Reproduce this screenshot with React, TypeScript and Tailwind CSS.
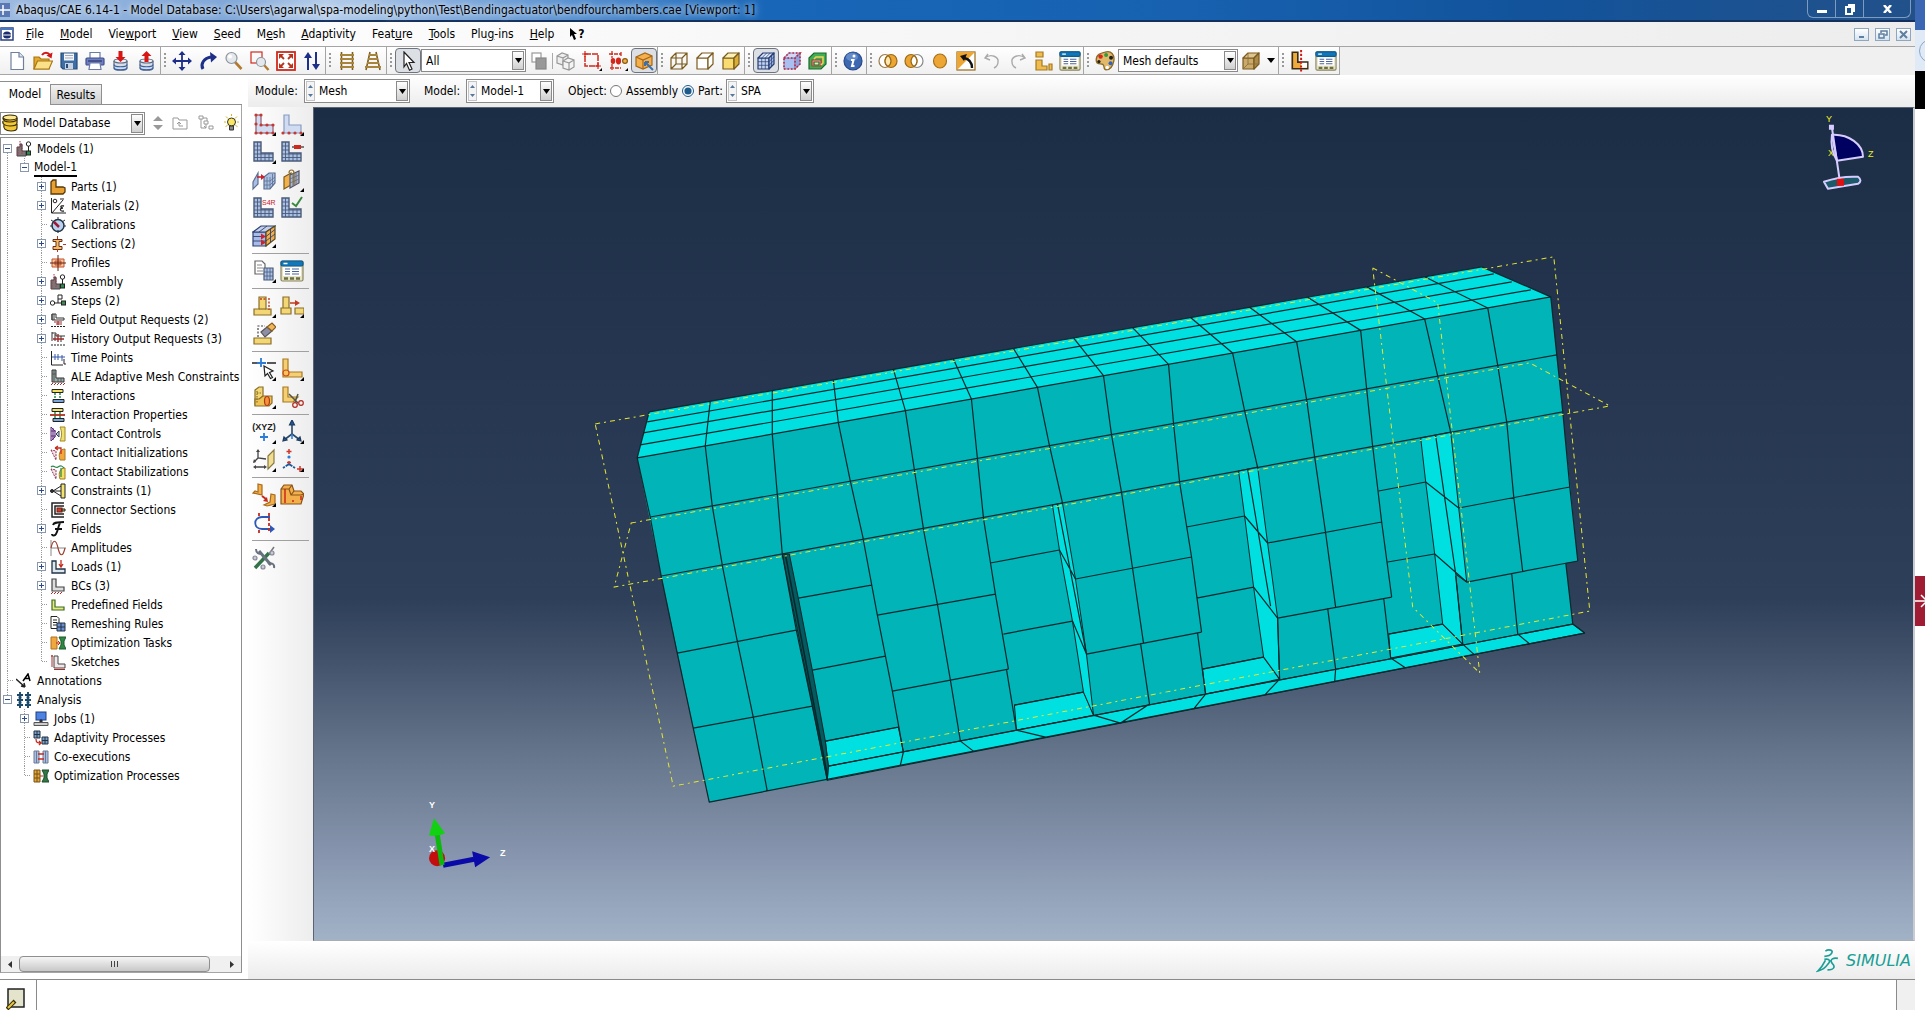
import React from 'react';

type Kids = { children?: React.ReactNode };

/* ---------- icon helpers ---------- */

const Ic = ({ s = 20, children }: Kids & { s?: number }) => (
  <svg width={s} height={s} viewBox="0 0 20 20" fill="none" stroke="#333" strokeWidth="1.2" className="shrink-0" aria-hidden="true">
    {children}
  </svg>
);

/* tool icon with an optional fly-out marker in the lower right corner */
const Ti = ({ fly, s = 24, children }: Kids & { fly?: boolean; s?: number }) => (
  <svg width={s} height={s} viewBox="0 0 24 24" fill="none" stroke="#333" strokeWidth="1.2" className="shrink-0" aria-hidden="true">
    {children}
    {fly && <path d="M24 20v4h-4z" fill="#000" stroke="none" />}
  </svg>
);

const MeshL = () => (
  <>
    <path d="M2 2h7v11h12v8H2z" fill="#a9c0e4" stroke="#4a5a78" strokeWidth="1.4" />
    <path d="M5.500 2v19M2 6h7M2 10h7M2 14h19M2 17.500h19M9 13v8M13 13v8M17 13v8" stroke="#4a5a78" strokeWidth="0.9" />
  </>
);

const TableIcon = () => (
  <>
    <rect x="1" y="2" width="22" height="20" rx="1.500" fill="#e6e2c4" stroke="#8a8560" />
    <rect x="1" y="2" width="22" height="5" rx="1.500" fill="#1277b8" stroke="#0d5c92" />
    <path d="M3.500 4.500h4" stroke="#fff" strokeWidth="1.500" />
    <rect x="3" y="8" width="18" height="9" fill="#fff" stroke="none" />
    <path d="M5 10h5M5 12.500h5M5 15h5M12 10h7M12 12.500h7M12 15h7" stroke="#4c669c" strokeWidth="1.100" />
    <path d="M4 19.500h4M10 19.500h4M16 19.500h4" stroke="#6b7040" strokeWidth="2.500" />
  </>
);

const Cube = ({ fill, top, side, line = '#7a5a1c' }: { fill: string; top: string; side: string; line?: string }) => (
  <g stroke={line} strokeLinejoin="round">
    <path d="M2 7h11v11H2z" fill={fill} />
    <path d="M2 7l5-5h11l-5 5z" fill={top} />
    <path d="M13 7l5-5v11l-5 5z" fill={side} />
  </g>
);

const Stack = ({ up }: { up?: boolean }) => (
  <>
    <path d="M3 10v7c0 3 13 3 13 0v-7" fill="#d9dde4" stroke="#5b6a82" />
    <ellipse cx="9.500" cy="10" rx="6.500" ry="2" fill="#eef1f6" stroke="#5b6a82" />
    <path d="M3 13.500c0 3 13 3 13 0M3 16.500c0 3 13 3 13 0" stroke="#3762a8" />
    {up ? (
      <path d="M9.500 0l5 5h-3v6h-4V5h-3z" fill="#d81414" stroke="none" />
    ) : (
      <path d="M7.500 0h4v6h3l-5 5-5-5h3z" fill="#d81414" stroke="none" />
    )}
  </>
);

const Yellow = '#f2d774';
const Orange = '#f3b04a';

/* ---------- toolbar icons ---------- */

const tb: Record<string, React.ReactNode> = {
  new: <Ic><path d="M4 1.500h8l4.500 4.500v12.500H4z" fill="#fff" stroke="#70809c" /><path d="M12 1.500V6h4.500" fill="#dfe6f2" stroke="#70809c" /></Ic>,
  open: <Ic><path d="M1 18V6h5l2 2h8v10z" fill="#e3a92c" stroke="#a87612" /><path d="M1 18l3.500-8h15L16 18z" fill="#fbe08a" stroke="#a87612" /><path d="M9 4c2-3 6-3 8 0" stroke="#d01818" strokeWidth="2" /><path d="M19.500 1.500l-1 6-5-3z" fill="#d01818" stroke="none" /></Ic>,
  save: <Ic><path d="M2 2h16v16H4l-2-2z" fill="#3d6ea5" stroke="#284c78" /><rect x="5" y="2.500" width="10" height="7" fill="#f4f6fa" stroke="none" /><path d="M6 4.500h8M6 7h8" stroke="#9ab" /><rect x="6" y="12" width="8" height="6" fill="#c8d2df" stroke="none" /><path d="M8 13v4" stroke="#284c78" strokeWidth="2" /></Ic>,
  print: <Ic><path d="M5 7V1.500h10V7" fill="#fff" stroke="#6a7ba6" /><rect x="1" y="7" width="18" height="7" rx="1" fill="#6d7fc0" stroke="#414f8c" /><path d="M3 10h14" stroke="#39437a" strokeWidth="1.500" /><path d="M5 12h10l1 6.500H4z" fill="#fff" stroke="#6a7ba6" /></Ic>,
  dbIn: <Ic><Stack /></Ic>,
  dbOut: <Ic><Stack up /></Ic>,
  pan: <Ic><path d="M10 3v14M3 10h14" stroke="#1d2f88" strokeWidth="1.800" /><path d="M10 0l3.500 4h-7zM10 20l3.500-4h-7zM0 10l4-3.500v7zM20 10l-4-3.500v7z" fill="#1d2f88" stroke="none" /></Ic>,
  rotate: <Ic><path d="M5 18C2 13 6 7 13 6" stroke="#1d2f88" strokeWidth="3" /><path d="M12 1l7 5-6 5.500z" fill="#1d2f88" stroke="none" /></Ic>,
  zoom: <Ic><path d="M11 11l6.500 7" stroke="#b27a2e" strokeWidth="2.600" /><circle cx="7.500" cy="7" r="5.500" fill="#e4e8ec" stroke="#8d949c" /><circle cx="6" cy="5.500" r="2" fill="#fff" stroke="none" /></Ic>,
  zoomBox: <Ic><rect x="1" y="1" width="11" height="11" stroke="#d02a1c" /><path d="M14 14l4.500 5" stroke="#b27a2e" strokeWidth="2.400" /><circle cx="11" cy="11" r="4.500" fill="#e4e8ec" stroke="#8d949c" /></Ic>,
  fit: <Ic><rect x="1" y="1" width="18" height="18" stroke="#d02a1c" strokeWidth="1.800" fill="#fff" /><path d="M4 4l4 4M16 4l-4 4M4 16l4-4M16 16l-4-4" stroke="#b8321c" strokeWidth="1.800" /><path d="M3 3h5L3 8zM17 3v5l-5-5zM3 17v-5l5 5zM17 17h-5l5-5z" fill="#b8321c" stroke="none" /></Ic>,
  cycle: <Ic><path d="M6 5v14M14 1v14" stroke="#1d2f88" strokeWidth="2" /><path d="M6 1l4 6H2zM14 19l4-6h-8z" fill="#1d2f88" stroke="none" /></Ic>,
  rails: <Ic><path d="M4.500 1v18M15.500 1v18" stroke="#7d5c20" strokeWidth="1.600" /><path d="M3 4h14M3 8h14M3 12h14M3 16h14" stroke="#a8853a" strokeWidth="1.800" /></Ic>,
  railsPersp: <Ic><path d="M7 1L3 19M13 1l4 18" stroke="#7d5c20" strokeWidth="1.600" /><path d="M6 4h8M5 8h10M4 12h12M2 16h16" stroke="#a8853a" strokeWidth="1.800" /></Ic>,
  cursor: <Ic><path d="M6 1l10 10.500h-5l3 6.500-2.500 1.200-3-6.700L6 16z" fill="#fff" stroke="#222" /></Ic>,
  copy: <Ic><rect x="3" y="2" width="9" height="9" fill="#fff" stroke="#999" /><rect x="7" y="7" width="10" height="11" fill="#999" stroke="#888" /></Ic>,
  ghost: <Ic><path d="M1 5l5-3 6 2v7l-5 3-6-2zM1 5l6 2v7M7 7l5-3" stroke="#999" fill="#eee" /><path d="M7 10l5-3 6 2v7l-5 3-6-2zM7 10l6 2v7M13 12l5-3" stroke="#999" fill="#f4f4f4" /></Ic>,
  selBox: <Ic><path d="M3 3h13v12H3z" stroke="#cf2a1c" strokeDasharray="6 1" strokeWidth="1.500" /><path d="M3 0v6M0 3h6M16 12v6M13 15h6" stroke="#cf2a1c" /><path d="M20 17v3h-3z" fill="#000" stroke="none" /></Ic>,
  selDots: <Ic><path d="M1 3h12M4 0v7M4 13v6M2 17h11M13 1v4" stroke="#cf2a1c" strokeWidth="1.300" strokeDasharray="4 1" /><ellipse cx="5" cy="10" rx="2.300" ry="3" fill="#d3261a" stroke="none" /><ellipse cx="10.500" cy="10" rx="2.600" ry="3.400" fill="#d3261a" stroke="none" /><circle cx="17" cy="10" r="2.400" fill={Orange} stroke="#8a5a10" /><path d="M20 17v3h-3z" fill="#000" stroke="none" /></Ic>,
  selCube: <Ic><path d="M2 6l9-4 7 3v9l-9 4-7-3z" fill="#f4b04c" stroke="#a6671a" /><path d="M2 6l7 3 9-4M9 9v9" stroke="#a6671a" /><path d="M19 19l-7-7M11 11h4M11 11v4" stroke="#3f6ea8" strokeWidth="2" /></Ic>,
  wire: <Ic><g stroke="#7a5a1c"><path d="M2 7h11v11H2zM7 2h11v11H7zM2 7l5-5M13 7l5-5M2 18l5-5M13 18l5-5" /></g></Ic>,
  hidden: <Ic><Cube fill="#fff" top="#fff" side="#fff" /></Ic>,
  shaded: <Ic><Cube fill="#f8dc72" top="#fdf0b4" side="#d9ae36" /></Ic>,
  meshCube: <Ic><Cube fill="#c3d4ee" top="#dbe6f6" side="#9fb6de" line="#253c74" /><path d="M5.700 7v11M9.300 7v11M2 10.700h11l5-5M2 14.300h11l5-5M5.700 7l5-5M9.300 7l5-5M15.500 4.500v11" stroke="#253c74" strokeWidth="0.700" /></Ic>,
  seedCube: <Ic><Cube fill="#a9bff0" top="#cfd8f6" side="#8fa4dc" line="#8090c0" /><path d="M2 7h11v11H2zM2 7l5-5h11l-5 5M18 2v11l-5 5" stroke="#d0203a" strokeWidth="1.600" strokeDasharray="1.500 2" /></Ic>,
  nested: <Ic><path d="M1 7l5-5h12v11l-5 5H1z" fill="#3fae54" stroke="#1e6a2c" /><path d="M4 9h9v6H4z" fill="#f5a7a0" stroke="#b43a2a" /><path d="M6 8l2-2h7v6l-2 2" stroke="#f0d458" strokeWidth="1.500" /><path d="M6 11h5v3H6z" fill="#dff0b0" stroke="#1e6a2c" /></Ic>,
  info: <Ic><circle cx="10" cy="10" r="9" fill="#3b68b0" stroke="#27498a" /><ellipse cx="9" cy="6" rx="6" ry="4" fill="#7fa3dc" stroke="none" opacity="0.600" /><circle cx="11" cy="5" r="1.500" fill="#fff" stroke="none" /><path d="M8 9h2.500L9 15h2.500" stroke="#fff" strokeWidth="2" /></Ic>,
  unionR: <Ic><ellipse cx="7" cy="10" rx="6" ry="6.500" fill="#fff" stroke="#9a7a48" /><ellipse cx="13" cy="10" rx="6" ry="6.500" fill="#eda534" stroke="#9a6a18" /><path d="M10 4.500c4 3 4 8 0 11c-4-3-4-8 0-11z" fill="#ffe7b0" stroke="#9a6a18" /></Ic>,
  unionL: <Ic><ellipse cx="13" cy="10" rx="6" ry="6.500" fill="#fff" stroke="#888" /><ellipse cx="7" cy="10" rx="6" ry="6.500" fill="#eda534" stroke="#9a6a18" /><path d="M10 4.500c4 3 4 8 0 11c-4-3-4-8 0-11z" fill="#fff" stroke="#9a6a18" /></Ic>,
  disc: <Ic><ellipse cx="10" cy="10" rx="6.500" ry="7" fill="#eda534" stroke="#a8721c" /></Ic>,
  replace: <Ic><rect x="1" y="1" width="18" height="18" fill="#fff" stroke="#9a6a18" /><path d="M1 1h18L1 19z" fill="#eda534" stroke="none" /><path d="M16 17c0-6-3-9-8-10" stroke="#111" strokeWidth="2.400" /><path d="M4 5l7-2-3 7z" fill="#111" stroke="none" /></Ic>,
  undo: <Ic><path d="M6 3l-3 4 5 2M3 7c6-5 14-1 13 4c0 3-2 5-4 6" stroke="#aaa" strokeWidth="1.400" /></Ic>,
  redo: <Ic><path d="M14 3l3 4-5 2M17 7C11 2 3 6 4 11c0 3 2 5 4 6" stroke="#aaa" strokeWidth="1.400" /></Ic>,
  parts: <Ic><path d="M2 1h7v5H2zM2 9h6v6h5v4H2zM15 13h3v6h-3z" fill="#eebc50" stroke="#a87a20" /></Ic>,
  table: <Ti s={22}><TableIcon /></Ti>,
  palette: <Ic s={22}><path d="M10 2c6-2 9 3 8 8s-3 8-7 8c-3 0-1-4-3-5s-6 1-6-4 4-6 8-7z" fill="#e2b968" stroke="#8d6a28" /><circle cx="6" cy="6" r="2" fill="#d6281e" stroke="none" /><circle cx="11" cy="4.500" r="1.800" fill="#2e9a42" stroke="none" /><circle cx="15.500" cy="7" r="1.800" fill="#202020" stroke="none" /><circle cx="15" cy="12" r="1.800" fill="#2f63c0" stroke="none" /><circle cx="12" cy="16" r="1.600" fill="#fff" stroke="none" /><circle cx="4.500" cy="10.500" r="1.500" fill="#222" stroke="none" /></Ic>,
  tanCube: <Ic><Cube fill="#c9aa6c" top="#dcc590" side="#a98a4c" /><path d="M7 2v11h11M7 13l-5 5" stroke="#8a6a30" strokeWidth="0.800" /></Ic>,
  datum: <Ic s={22}><path d="M3 2h5v9h9v6H3z" fill="#eeaa3c" stroke="#3b2c14" strokeWidth="1.500" /><path d="M11 11.700h5.500v4.500H11z" fill="#fff" stroke="none" /><path d="M11 0v20" stroke="#d01818" strokeWidth="1.800" strokeDasharray="2 1.500" /></Ic>,
};

/* ---------- tool box icons ---------- */

const GeoL = ({ dots }: { dots: number[][] }) => (
  <>
    <path d="M4 3h5v10h12v8H4z" fill="#cfdcf2" stroke="#8a9cc0" />
    {dots.map(([x, y]) => <circle key={`${x}-${y}`} cx={x} cy={y} r="1.600" fill="#c33a34" stroke="none" />)}
  </>
);

const tool: Record<string, React.ReactNode> = {
  seedPart: <Ti fly><GeoL dots={[[4, 3], [9, 3], [4, 12], [4, 21], [9, 13], [15, 13], [21, 13], [21, 21], [15, 21], [9, 21]]} /><path d="M4 3h5v10h12v8H4z" stroke="#c33a34" strokeWidth="0.600" /></Ti>,
  seedEdge: <Ti fly><GeoL dots={[[3, 21], [9, 21], [15, 21], [21, 21]]} /></Ti>,
  meshPart: <Ti fly><MeshL /></Ti>,
  meshRegion: <Ti><MeshL /><path d="M12 7h12" stroke="#555" strokeWidth="1.500" /><rect x="14" y="5" width="7" height="4" fill="#d0281c" stroke="none" /></Ti>,
  stackDir: <Ti><path d="M1 14l5-9v11l-5 5z" fill="#a9c0e4" stroke="#5d6f90" /><path d="M12 9l5-4h6v10l-5 6h-6z" fill="#a9c0e4" stroke="#5d6f90" /><path d="M12 13h6l5-4M12 17h6l5-5M15 9v12M18 9v12M20.500 6v12" stroke="#5d6f90" strokeWidth="0.800" /><path d="M5 9h6" stroke="#c8202e" strokeWidth="1.600" /><path d="M9 6l4 3-4 3z" fill="#c8202e" stroke="none" /></Ti>,
  assocMesh: <Ti fly><path d="M4 9l7-4v12l-7 4z" fill={Orange} stroke="#7a5a1c" /><path d="M10 7l9-4v12l-9 5z" fill="#a9b8cc" stroke="#556" /><path d="M13 6v12M16 5v12M10 11l9-4M10 15l9-4" stroke="#667" strokeWidth="0.800" /><path d="M9 5c0-4 5-4 5 0v12" stroke="#8a6a20" /></Ti>,
  elemType: <Ti><MeshL /><text x="10" y="9" fontSize="7" fontFamily="Liberation Sans" fill="#c8202e" stroke="none">S4R</text></Ti>,
  verify: <Ti><MeshL /><path d="M12 7l4 3 6-9" stroke="#3a8a42" strokeWidth="2" /></Ti>,
  bottomUp: <Ti fly><path d="M1 8h13v14H1z" fill="#a8bce8" stroke="#2f4270" /><path d="M1 8l8-6h14l-9 6z" fill="#c3d0ea" stroke="#2f4270" /><path d="M14 8l9-6v13l-9 7z" fill={Orange} stroke="#5a4a20" /><path d="M1 12.500h13l9-7M1 17h13l9-7M7 8l8-6M18.500 5v13.500" stroke="#2f4270" strokeWidth="0.900" /><path d="M9 9.500l5 3-5 3zM9 15.500l5 3-5 3z" fill="#d0202c" stroke="none" /></Ti>,
  remesh: <Ti fly><path d="M3 2h7l3 3v10H3z" fill="#fff" stroke="#666" /><path d="M5 6h5M5 9h6M5 12h6" stroke="#888" /><path d="M12 9h9v12h-9z" fill="#a9c0e4" stroke="#4a5a78" /><path d="M15 9v12M18 9v12M12 13h9M12 17h9" stroke="#4a5a78" strokeWidth="0.800" /></Ti>,
  manager: <Ti><TableIcon /></Ti>,
  partition: <Ti fly><path d="M7 3h7v12h5v6H2v-6h5z" fill={Yellow} stroke="#8a6f2a" /><path d="M7 15h7" stroke="#8a6f2a" /><path d="M8 5h6M17 4v12" stroke="#c33a1c" strokeDasharray="2 1.500" strokeWidth="1.400" /></Ti>,
  moveFace: <Ti fly><path d="M3 3h6v11H3zM1 14h10v6H1zM15 14h9v6h-9z" fill={Yellow} stroke="#8a6f2a" /><path d="M10 9h7" stroke="#c33a1c" strokeWidth="1.500" /><path d="M15 6l5 3-5 3z" fill="#c33a1c" stroke="none" /></Ti>,
  erase: <Ti><path d="M2 16h17v6H2z" fill={Yellow} stroke="#8a6f2a" /><path d="M6 15V4h7" stroke="#444" strokeDasharray="2 1.500" /><path d="M9 10l6-5 5 4-7 6z" fill="#8d8fa6" stroke="#555" /><path d="M15 5l5-4 4 4-4 4z" fill="#eeb75a" stroke="#8a5a20" /></Ti>,
  pick: <Ti fly><path d="M0 6h7M15 6h9" stroke="#222" strokeWidth="1.500" /><path d="M9 1v9M5 6h9" stroke="#2b7bd6" strokeWidth="1.800" /><path d="M12 9l9 5-3.500 1.500 3 5-2 1-3-5-2.500 2.500z" fill="#fff" stroke="#222" /></Ti>,
  mergeEdge: <Ti fly><path d="M3 2h5v13h14v5H3z" fill="#f4cf74" stroke="#a87a20" /><circle cx="6" cy="16" r="3" stroke="#cc4a18" fill="#f9c35c" /></Ti>,
  cellPart: <Ti fly><path d="M3 5l4-3h4v9l-3 3v6H3z" fill={Yellow} stroke="#8a6f2a" /><path d="M7 14l4-3h9v7l-3 3H3v-7z" fill="#eec254" stroke="#8a6f2a" /><ellipse cx="15" cy="16" rx="2.500" ry="4.500" fill="#f5913a" stroke="#b03a14" /><path d="M5 6v12M5 8h5" stroke="#8a6f2a" strokeDasharray="1.500 1" /></Ti>,
  trim: <Ti><path d="M3 2h5v10h10l-5 5H3z" fill="#f4cf74" stroke="#a87a20" /><path d="M9 9l9 9M18 9l-3 8" stroke="#554" strokeWidth="1.500" /><circle cx="15" cy="20" r="2.300" stroke="#b02a20" /><circle cx="21" cy="18" r="2.300" stroke="#b02a20" /></Ti>,
  xyz: <Ti fly><text x="12" y="10" textAnchor="middle" fontSize="9" fontWeight="bold" fontFamily="Liberation Sans" fill="#222" stroke="none">(XYZ)</text><path d="M12 13v8M8 17h8" stroke="#2b7bd6" strokeWidth="1.800" /></Ti>,
  axes: <Ti fly><path d="M12 4v10l-8 6M12 14l8 6" stroke="#2a4a6a" strokeWidth="1.600" /><path d="M12 0l2.500 5h-5zM3 21l1-4 3 3zM21 21l-4-1 3-3z" fill="#1e5aa8" stroke="#1e3a5a" /><path d="M12 14v5" stroke="#2b7bd6" strokeWidth="1.500" /></Ti>,
  plane: <Ti fly><path d="M6 3v7l8 1M6 10l-4 4M3 19h10" stroke="#444" strokeWidth="1.300" /><path d="M6 1l2 3H4zM1 15l1-4 2 3zM1 19l3-2v4zM15 19l-3-2v4z" fill="#444" stroke="none" /><path d="M16 8l6-6v13l-6 6z" fill="#f1dd92" stroke="#8a7a40" /></Ti>,
  csys: <Ti fly><path d="M9 1v5M6.500 3.500h5M17 21h6M20 18v6M9 13v3M7 14.500h4" stroke="#d0362a" strokeWidth="1.500" /><circle cx="9" cy="9" r="1.600" fill="#2b7bd6" stroke="none" /><path d="M9 16l-6 4M9 16l6 4" stroke="#1e5a9a" strokeWidth="1.800" strokeDasharray="4 1" /></Ti>,
  editMesh: <Ti fly><path d="M6 1l4 1v10l-9-2 2-2 3 1z" fill={Orange} stroke="#a86a1c" /><path d="M19 11l4 1v9l-8 2-3-1 6-3z" fill={Orange} stroke="#a86a1c" /><path d="M10 13l4 3" stroke="#c8281c" strokeWidth="2" /><path d="M16 19l-5-1 4-4z" fill="#c8281c" stroke="none" /></Ti>,
  virtual: <Ti><path d="M1 6l3-4h8l2 6h7l3 3-3 10H1z" fill={Orange} stroke="#8a5218" /><path d="M1 6h8l2 6h10M9 6l3-4M11 12l3-4M21 12l3-1" stroke="#8a5218" /><path d="M5 6v14M12 18h2M21 13v4" stroke="#c8281c" strokeWidth="1.500" /></Ti>,
  loop: <Ti><path d="M18 6H10c-9 0-9 12 0 12h10" stroke="#2d58b8" strokeWidth="1.800" /><path d="M18 14l5 4-5 4z" fill="#2d58b8" stroke="none" /><path d="M7 2v4M7 19v4M17 2v20" stroke="#c8281c" strokeWidth="1.800" strokeDasharray="3 2" /></Ti>,
  wrench: <Ti><path d="M3 22L17 7" stroke="#33734a" strokeWidth="3.500" /><path d="M17 8l5-7" stroke="#777" strokeWidth="1.500" /><path d="M7 5l12 14" stroke="#68727e" strokeWidth="3" /><path d="M4 3c0 4 3 6 6 4M22 22c1-4-3-6-6-4" stroke="#68727e" strokeWidth="2" /><circle cx="3" cy="12" r="2" fill="#c6cbd2" stroke="#889" /><circle cx="20" cy="7" r="2" fill="#c6cbd2" stroke="#889" /><circle cx="11" cy="21" r="2" fill="#c6cbd2" stroke="#889" /></Ti>,
};

/* ---------- tree icons (16px) ---------- */

const t16 = (children: React.ReactNode) => (
  <svg width="16" height="16" viewBox="0 0 16 16" fill="none" stroke="#222" strokeWidth="1" className="shrink-0" aria-hidden="true">
    {children}
  </svg>
);

const modelGlyph = t16(<><path d="M1 14V6h3V3h2v7h4v5H1z" fill="#777" stroke="#444" /><path d="M4 0v4M2 6v9M6 4v10" stroke="#c0304a" strokeDasharray="1.500 1" /><circle cx="12.500" cy="3" r="2.200" fill="#fff" /><path d="M12.500 5v5" /><rect x="10.500" y="10" width="4" height="4" fill="#2e8a4a" /></>);
const contactBase = (c: string, top: React.ReactNode) => t16(<><path d="M1 5l5 10V6z" fill="#f2e6ea" stroke="#8a3050" strokeDasharray="2 1" /><path d="M15 4c-5 0-7 5-5 11h5z" fill={c} stroke="#a87a20" />{top}</>);

const tree: Record<string, React.ReactNode> = {
  model: modelGlyph,
  part: t16(<path d="M1 3l2-2h3v7h7l2 1v4l-2 2H1z" fill="#e8a030" stroke="#5a3a08" strokeWidth="1.300" />),
  material: t16(<><path d="M1.500 0v15H16M2 15L13 2M10 1l4 0" /><circle cx="5" cy="3" r="1.800" /><path d="M14 8c-4-1-4 2-1 2-4 0-3 4 1 3" strokeWidth="1.300" /></>),
  calib: t16(<><circle cx="8" cy="8.500" r="6" fill="#b9d3ee" stroke="#234" strokeWidth="1.500" /><path d="M8 0v3M1 3l3 2M15 3l-3 2M0 9h2M14 9h2M8 13v3" stroke="#234" /><path d="M9 10L4 5" stroke="#a01838" strokeWidth="2.500" /></>),
  section: t16(<><path d="M3 3.500h9v2H9v5h3v3H3v-3h3v-5H3z" fill="#f0bc6a" stroke="#6a2c14" /><path d="M7.500 0v3M7.500 13v3M13 8.500h3" stroke="#b03a28" /></>),
  profile: t16(<><path d="M2 4h12v8H2z" fill="#f8c49c" stroke="#c4502c" /><path d="M5 6h6v4H5z" stroke="#c4502c" fill="#e89060" /><path d="M0 8h16M8 0v16" stroke="#5a2010" /></>),
  step: t16(<><circle cx="2.500" cy="10" r="2.200" fill="#fff" /><path d="M5 10h6M8 6v4M8 2h4v4H8z" fill="#fff" /><rect x="11.500" y="8" width="4" height="4" fill="#3d8a4c" /></>),
  field: t16(<><path d="M2 2h4v4h8v2H2zM2 2v6M4 8V2" stroke="#333" /><path d="M4 10h8M6 12h6M8 9v4" stroke="#a02828" /><path d="M1 14.500h14" strokeDasharray="2 1" /></>),
  history: t16(<><path d="M2 1v9M2 2h4v3h9M5 3v7M11 5v6" stroke="#333" /><path d="M3 8h11M8 3v8" stroke="#a02828" strokeWidth="1.400" /><path d="M1 14h14" strokeDasharray="2 1" /></>),
  time: t16(<><path d="M1.500 1v14H13" /><path d="M2 7h13M5 4v6M8 4v6M12 5v6" stroke="#3558a8" /><path d="M14 9v5h2" /></>),
  ale: t16(<><path d="M2 1h4v8h8v4H2z" fill="#9aa" stroke="#333" /><path d="M4 1v12M2 5h4M8 9v4M11 9v4" stroke="#555" /><path d="M1 16l2-2M4 16l2-2M7 16l2-2M10 16l2-2M13 16l2-2" stroke="#b02828" /></>),
  inter: t16(<><path d="M2 1.500h11v3H2z" fill="#f4e060" /><path d="M5 5v6M10 5v6" stroke="#2e8a4a" strokeWidth="1.500" strokeDasharray="2 1" /><path d="M3 11.500h11v3H3z" fill="#7aa6da" /></>),
  interProp: t16(<><path d="M2 1.500h11v3H2z" fill="#f4e060" /><path d="M5 5v6M10 5v6" stroke="#2e8a4a" strokeWidth="1.500" /><path d="M0 8h15" stroke="#b03020" strokeWidth="1.800" /><path d="M3 11.500h11v3H3z" fill="#7aa6da" /></>),
  contact: t16(<><path d="M1 1l4 4v6l-4 4zM3 2v12M1 5h5M1 10h5" fill="#f0e0f0" stroke="#5a2a7a" /><path d="M10 1h5v14h-5c2-4 2-10 0-14z" fill="#f0e070" stroke="#a08a20" /><path d="M6 8l3-3v6z" fill="#bcd" stroke="#345" /></>),
  contactInit: contactBase('#f4a83c', <path d="M5 3h6v6M5 3l3-2M5 3l3 2" stroke="#c82a1c" strokeWidth="1.300" />),
  contactStab: contactBase('#f4e060', <path d="M1 3c3-3 4 2 7 0s4-1 6 1M11 4v9" stroke="#2e8a4a" strokeWidth="1.300" />),
  constraint: t16(<><path d="M11 1h4v14h-4z" fill="#f4e36c" /><path d="M11 3L3 8l8 5M3 8h8" /><circle cx="2" cy="8" r="1.500" fill="#333" /></>),
  connector: t16(<><path d="M14 1H2v14h12M14 4H5v8h9" strokeWidth="1.500" /><rect x="7" y="6" width="5" height="4" fill="#c8402c" stroke="#7a1a10" /><path d="M12 7h3v2h-3z" fill="#e8c040" /></>),
  fields: t16(<path d="M3 4c1-3 4-2.500 11-3M10 2C8 6 8 10 6 13c-1 2-4 2-4 0M5 8h7" stroke="#111" strokeWidth="1.900" />),
  amp: t16(<><path d="M1 0v16M1 8h15" stroke="#888" /><path d="M1 8c2-9 5-9 7 0s5 9 7 0" stroke="#a04030" strokeWidth="1.200" /></>),
  load: t16(<><path d="M2 2h4v8h9v4H2z" fill="#dce8ee" stroke="#234" strokeWidth="1.300" /><path d="M11 1v6M9 5l2 3 2-3" stroke="#c8281c" strokeWidth="1.300" /></>),
  bc: t16(<><path d="M2 1h4v8h8v4H2z" fill="#ddd" stroke="#444" strokeWidth="1.200" /><path d="M1 16l2-2M4 16l2-2M7 16l2-2M10 16l2-2" stroke="#b02828" /></>),
  predef: t16(<path d="M2 3h3v7h9v3H2z" fill="#e8e880" stroke="#3a6a20" strokeWidth="1.200" />),
  remesh: t16(<><path d="M1 0.500h6l2 2v10H1z" fill="#fff" /><path d="M3 4h4M3 6.500h4M3 9h4" /><path d="M7 7h8v8H7z" fill="#6b8fd0" stroke="#234" /><path d="M11 7v8M7 11h8" stroke="#234" /></>),
  opt: t16(<><path d="M1 2h6v12H1z" fill="#f0a83c" stroke="#b0701c" /><path d="M6 8h4M8 6l2 2-2 2" stroke="#c8281c" /><path d="M9 2h7l-2 4v4l2 4H9l2-4V6z" fill="#2f8a44" stroke="#1c5a2a" /></>),
  sketch: t16(<><path d="M4 2h4v8h7v4H4z" fill="#f0e8e8" stroke="#444" /><path d="M1 2h2M2 1v12M4 15.500h11" stroke="#b02828" /></>),
  annot: t16(<><path d="M0 6l9 8M9 14l-1-4M9 14l-4-1" strokeWidth="1.500" /><path d="M7 8l5-7 2 7M9 5.500h5" stroke="#000" strokeWidth="1.500" /></>),
  analysis: t16(<path d="M4 0v16M12 0v16M1 3h6M1 8h6M1 13h6M9 3h6M9 8h6M9 13h6M2.500 5.500h3M2.500 10.500h3M10.500 5.500h3M10.500 10.500h3" stroke="#1c4a6c" strokeWidth="1.900" />),
  job: t16(<><rect x="3" y="1" width="10" height="8" fill="#4c82e4" stroke="#223c7a" /><path d="M7 9h2v2H7z" fill="#555" /><path d="M1 11.500h14v3H1z" fill="#ccc" stroke="#555" /></>),
  adapt: t16(<><path d="M1 1h6v7H1zM9 7h6v7H9z" fill="#7aa0c8" stroke="#234" /><path d="M4 1v7M1 4.500h6M12 7v7M9 10.500h6" stroke="#234" /><path d="M3 9c0 4 2 4 5 4M6 11l2 2-2 2" stroke="#c8281c" strokeWidth="1.300" /></>),
  coexec: t16(<><path d="M1 2h5v12H1zM10 2h5v12h-5z" fill="#a9bede" stroke="#6a7a9a" /><path d="M3.500 2v12M12.500 2v12" stroke="#6a7a9a" /><path d="M5 5h6M5 10h6" stroke="#c8281c" strokeWidth="1.500" /></>),
  optProc: t16(<><path d="M1 2h6v12H1z" fill="#e0a83c" stroke="#7a5010" /><path d="M4 2v12M1 6h6M1 10h6" stroke="#7a5010" /><path d="M7 8h3" stroke="#c8281c" /><path d="M9 2h7l-2 4v4l2 4H9l2-4V6z" fill="#2f7a44" stroke="#1c4a2a" /></>),
};

/* ---------- tree data ---------- */

/* guide codes: R first root, E last root, o open node, + closed node, t tee, e end branch, l line, b blank */
type Row = [string, string, string | null];
const rows: Row[] = [
  ['R', 'Models (1)', 'model'],
  ['lo', 'Model-1', null],
  ['lb+', 'Parts (1)', 'part'],
  ['lb+', 'Materials (2)', 'material'],
  ['lbt', 'Calibrations', 'calib'],
  ['lb+', 'Sections (2)', 'section'],
  ['lbt', 'Profiles', 'profile'],
  ['lb+', 'Assembly', 'model'],
  ['lb+', 'Steps (2)', 'step'],
  ['lb+', 'Field Output Requests (2)', 'field'],
  ['lb+', 'History Output Requests (3)', 'history'],
  ['lbt', 'Time Points', 'time'],
  ['lbt', 'ALE Adaptive Mesh Constraints', 'ale'],
  ['lbt', 'Interactions', 'inter'],
  ['lbt', 'Interaction Properties', 'interProp'],
  ['lbt', 'Contact Controls', 'contact'],
  ['lbt', 'Contact Initializations', 'contactInit'],
  ['lbt', 'Contact Stabilizations', 'contactStab'],
  ['lb+', 'Constraints (1)', 'constraint'],
  ['lbt', 'Connector Sections', 'connector'],
  ['lb+', 'Fields', 'fields'],
  ['lbt', 'Amplitudes', 'amp'],
  ['lb+', 'Loads (1)', 'load'],
  ['lb+', 'BCs (3)', 'bc'],
  ['lbt', 'Predefined Fields', 'predef'],
  ['lbt', 'Remeshing Rules', 'remesh'],
  ['lbt', 'Optimization Tasks', 'opt'],
  ['lbe', 'Sketches', 'sketch'],
  ['t', 'Annotations', 'annot'],
  ['E', 'Analysis', 'analysis'],
  ['b+', 'Jobs (1)', 'job'],
  ['bt', 'Adaptivity Processes', 'adapt'],
  ['bt', 'Co-executions', 'coexec'],
  ['be', 'Optimization Processes', 'optProc'],
];

const Guide = ({ k }: { k: string }) => {
  const box = 'REo+'.includes(k);
  const svg = (
    <svg width="17" height="19" viewBox="0 0 17 19" aria-hidden="true" className="shrink-0">
      <g stroke="#9a9a9a" strokeDasharray="1 1">
        {'lt+'.includes(k) && <path d="M8.500 0v19" />}
        {(k === 'e' || k === 'E' || k === 'o') && <path d="M8.500 0v10" />}
        {k === 'R' && <path d="M8.500 10v9" />}
        {'te'.includes(k) && <path d="M9 9.500h5" />}
      </g>
      {box && (
        <>
          <rect x="4.500" y="5.500" width="8" height="8" fill="#fff" stroke="#8a98ae" />
          <path d={k === '+' ? 'M6 9.500h5M8.500 7v5' : 'M6 9.500h5'} stroke="#2c4a8c" />
        </>
      )}
    </svg>
  );
  return box ? <button type="button" aria-label="Toggle branch" className="shrink-0">{svg}</button> : svg;
};

/* ---------- form bits ---------- */

const Arrow = () => (
  <span className="pointer-events-none m-px flex w-3 shrink-0 items-center justify-center border border-[#8a8a8a] bg-gradient-to-b from-white to-[#cfcfcf]">
    <svg width="7" height="5" viewBox="0 0 7 5"><path d="M0 0h7L3.500 5z" fill="#000" /></svg>
  </span>
);

const Combo = ({ label, value, className, spin }: { label: string; value: string; className: string; spin?: boolean }) => (
  <span className={`flex border border-[#8a8a8a] bg-white ${className}`}>
    {spin && (
      <span className="my-px ml-px flex w-[9px] shrink-0 flex-col items-center justify-around border border-[#c4c4c4] bg-[#f4f4f4]">
        <svg width="5" height="3" viewBox="0 0 5 3"><path d="M0 3h5L2.500 0z" fill="#55779a" /></svg>
        <svg width="5" height="3" viewBox="0 0 5 3"><path d="M0 0h5L2.500 3z" fill="#55779a" /></svg>
      </span>
    )}
    <select aria-label={label} defaultValue={value} className="min-w-0 flex-1 appearance-none bg-transparent px-1 outline-none">
      <option>{value}</option>
    </select>
    <Arrow />
  </span>
);

const Grip = () => (
  <span className="flex w-2 shrink-0 items-center justify-center">
    <svg width="2" height="16" viewBox="0 0 2 16"><path d="M1 0v16" stroke="#999" strokeWidth="2" strokeDasharray="2 2" /></svg>
  </span>
);

const Tb = ({ id, on }: { id: string; on?: boolean }) => (
  <button
    type="button"
    aria-label={id}
    className={`flex h-[25px] w-[26px] shrink-0 items-center justify-center overflow-hidden rounded-sm ${on ? 'border border-[#6d7480] bg-[#dcdfe3]' : ''}`}
  >
    {tb[id]}
  </button>
);

const Group = ({ first, children }: Kids & { first?: boolean }) => (
  <div className="flex items-center border-r border-[#a5a5a5]">
    {first ? <span className="w-1 shrink-0" /> : <Grip />}
    {children}
  </div>
);

const Tools = ({ ids }: { ids: string[] }) => (
  <div className="grid grid-cols-[24px_24px] gap-1 py-[5px]">
    {ids.map((id) => (
      <button key={id} type="button" aria-label={id} className="flex size-6 items-center justify-center">
        {tool[id]}
      </button>
    ))}
  </div>
);

/* ---------- viewport drawing ---------- */

const lerp = (a: number[], b: number[], x: number) => a[1] + ((x - a[0]) * (b[1] - a[1])) / (b[0] - a[0]);

const backX = [649, 710, 772, 833, 893, 953, 1013, 1073, 1132, 1190, 1249, 1307, 1366, 1424, 1481];
const frontX = [637, 705, 772, 838, 905, 971, 1037, 1103, 1168, 1232, 1296, 1360, 1424, 1487, 1550];
const row1X = [650, 712, 777, 850, 914, 977, 1049, 1111, 1173, 1244, 1306, 1366, 1437, 1497, 1556];
const row2X = [661, 722, 782, 863, 923, 983, 1062, 1121, 1179, 1257, 1314, 1372, 1450, 1506, 1562];

const edge = {
  back: [[649, 412], [1481, 267]],
  front: [[637, 458], [1550, 297]],
  row1: [[650, 517], [1556, 355]],
  row2: [[661, 576], [1562, 412]],
};
const pt = (e: number[][], x: number) => `${x} ${lerp(e[0], e[1], x).toFixed(1)}`;

const columns = frontX
  .map((fx, i) => `M${pt(edge.back, backX[i])}L${pt(edge.front, fx)}L${pt(edge.row1, row1X[i])}L${pt(edge.row2, row2X[i])}`)
  .join('');

const blockLines = [
  'M661 576L677 653L693 728L709 802L1584 633',
  'M722 565L737 641L753 717L767 791',
  'M782 554L796 630L812 706L827 780',
  'M677 653L796 630M693 728L812 706',
  'M798 598L871 585M812 670L885 656M825 741L898 727',
  'M863 540L877 615L892 691L903 752L900 765',
  'M923 529L937 604L950 680L960 741L973 751',
  'M983 518L995 594L1008 669M1006 669L1016 730L1045 737',
  'M877 615L995 594M892 691L1008 669',
  'M990 563L1059 550M1003 634L1072 621M1014 705L1083 692',
  'M1121 492L1132 568L1143 643M1140 643L1149 704L1120 723L1093 715',
  'M1179 482L1191 557L1201 632M1197 633L1205 694L1193 709',
  'M1075 579L1191 557M1086 654L1201 632',
  'M1277 618L1279 679M1455 576L1462 644',
  'M1186 527L1244 516M1196 598L1253 587M1202 669L1263 657',
  'M1314 457L1325 533L1335 607M1327 608L1335 669L1334 682',
  'M1372 446L1381 522L1391 597M1383 598L1390 658L1405 668',
  'M1267 543L1381 522M1277 618L1391 597',
  'M1378 491L1425 482M1387 562L1434 554M1388 634L1442 624',
  'M1506 422L1513 497L1522 572M1511 574L1517 634L1529 644',
  'M1562 412L1569 487L1577 561M1565 563L1572 624L1584 633',
  'M1458 508L1569 487M1466 582L1577 561',
  'M828 766L1572 624M1279 679L1264 695M1462 644L1474 655',
].join('');

const walls = [
  'M1052 505L1059 550L1072 621L1083 692L1093 715L1086 654L1075 579L1062 503z',
  'M1238 471L1244 516L1253 587L1263 657L1279 679L1277 618L1267 543L1257 467z',
  'M1420 438L1425 482L1434 554L1442 624L1462 644L1455 574L1466 582L1458 508L1450 432z',
];
const floors = [
  'M825 741L898 727L903 752L828 766z',
  'M1014 705L1083 692L1093 715L1016 730z',
  'M1202 669L1263 657L1279 679L1205 694z',
  'M1388 634L1442 624L1462 644L1390 658z',
  'M828 766L1572 624L1584 633L827 780z',
];

const topRows = [[647, 422, 1493, 274], [643, 433, 1511, 282], [640, 445, 1530, 290]];

const planes = [
  'M595 424L1553 257L1589 611L673 786z',
  'M631 523L1529 363L1609 406L614 587z',
  'M1372 268L1437 303L1479 673L1412 607z',
];

const Scene = () => (
  <svg viewBox="314 107 1598 834" preserveAspectRatio="xMidYMid slice" className="absolute inset-0 size-full" role="img" aria-label="Meshed part">
    <g strokeLinejoin="round">
      <path d="M649 412L1481 267L1550 297L637 458z" fill="#00e0e0" />
      <path d="M637 458L1550 297L1562 412L1577 561L1565 563L1572 624L828 766L827 780L709 802L661 576z" fill="#00b4b8" />
      {floors.map((d) => <path key={d} d={d} fill="#00e0e0" stroke="#06282c" />)}
      {walls.map((d) => <path key={d} d={d} fill="#00e0e0" stroke="#06282c" />)}
      <path d="M782 554L789 554L798 598L812 670L825 741L828 766L827 780z" fill="#045a5e" stroke="#06282c" />
      <path d="M785 554L827 775" stroke="#06282c" strokeWidth="1.500" />
      <g fill="none" stroke="#06282c" strokeWidth="1.200">
        <path d={columns} />
        <path d={blockLines} />
        <path d="M649 412L1481 267M637 458L1550 297M650 517L1556 355M661 576L1562 412" />
        {topRows.map(([a, b, c, d]) => <path key={b} d={`M${a} ${b}L${c} ${d}`} />)}
        <path d="M1057 504L1086 654M1059 550L1075 579M1072 621L1086 654" />
        <path d="M1247 469L1270 606M1244 516L1267 543M1253 587L1277 618" />
        <path d="M1435 436L1455 574M1425 482L1458 508M1434 554L1466 582" />
      </g>
    </g>
    <g fill="none" stroke="#e6e632" strokeDasharray="5 4 2 4">
      {planes.map((d) => <path key={d} d={d} />)}
    </g>
    <g fontFamily="Liberation Sans" fontSize="9" fontWeight="bold">
      <g fill="#fff">
        <text x="429" y="808">Y</text>
        <text x="500" y="856">Z</text>
      </g>
      <circle cx="437" cy="858" r="8" fill="#c40d0d" />
      <path d="M443 865L474 859" stroke="#0a0aa8" strokeWidth="5" />
      <path d="M472 851L490 857L475 867z" fill="#0a0aa8" />
      <path d="M437 833L442 865" stroke="#0cb80c" strokeWidth="5" />
      <path d="M434 818L445 833Q437 837 429 835z" fill="#12d012" />
      <text x="429" y="852" fill="#fff">X</text>
      <g fill="#f0f020" fontWeight="normal">
        <text x="1825" y="122">Y</text>
        <text x="1827" y="156">X</text>
        <text x="1867" y="157">Z</text>
      </g>
    </g>
    <g stroke="#d6ccff" strokeWidth="2" strokeLinejoin="round">
      <path d="M1823 182Q1840 176 1857 177Q1862 181 1857 184L1827 189z" fill="#1c5a6a" />
      <path d="M1831 135C1848 134 1862 145 1862 157L1836 161z" fill="#000060" />
      <path d="M1831 128L1839 182M1831 135Q1829 150 1836 161" fill="none" />
    </g>
    <rect x="1828" y="125" width="5" height="5" fill="#d6ccff" />
    <rect x="1836" y="179" width="7" height="7" fill="#e01010" />
  </svg>
);

/* ---------- page ---------- */

const menus: [string, string, string][] = [
  ['', 'F', 'ile'], ['', 'M', 'odel'], ['Vie', 'w', 'port'], ['', 'V', 'iew'], ['', 'S', 'eed'], ['M', 'e', 'sh'],
  ['', 'A', 'daptivity'], ['Feat', 'u', 're'], ['', 'T', 'ools'], ['Plu', 'g', '-ins'], ['', 'H', 'elp'],
];

const MdiBtn = ({ label, children }: Kids & { label: string }) => (
  <button type="button" aria-label={label} className="flex h-[13px] w-[15px] items-center justify-center border border-[#8fa6c0] bg-gradient-to-b from-white to-[#d5e4f2]">
    <svg width="10" height="9" viewBox="0 0 10 9" fill="none" stroke="#5f7f9f" strokeWidth="1.500">{children}</svg>
  </button>
);

export default function App() {
  return (
    <div className="flex h-screen min-h-[760px] w-full overflow-hidden bg-white font-['DejaVu_Sans_Condensed','DejaVu_Sans',sans-serif] text-xs leading-4 text-black">
      <div className="flex min-w-0 flex-1 flex-col bg-white">
        <header className="flex h-[22px] shrink-0 items-stretch justify-between border-b-2 border-[#14305c] bg-[linear-gradient(to_right,#9dbae0_0,#7ea6d8_12%,#b4cdea_17%,#7ea9dc_24%,#4a88cc_32%,#1866b8_40%,#1761b0_62%,#12539b_80%,#22518a_100%)]">
          <div className="flex items-center gap-1">
            <svg width="12" height="14" viewBox="0 0 12 14" aria-hidden="true"><rect width="10" height="14" fill="#5a78b4" /><path d="M0 7h10M3 2v10" stroke="#fff" strokeWidth="1.500" /></svg>
            <h1 className="whitespace-nowrap [text-shadow:0_0_5px_#ffffffc0,0_0_8px_#ffffffc0]">
              Abaqus/CAE 6.14-1 - Model Database: C:\Users\agarwal\spa-modeling\python\Test\Bendingactuator\bendfourchambers.cae [Viewport: 1]
            </h1>
          </div>
          <div className="mr-1 flex h-[18px] rounded-b-md border border-t-0 border-[#7d9cc0]">
            <button type="button" aria-label="Minimize" className="flex w-7 items-center justify-center border-r border-[#7d9cc0]"><svg width="12" height="10" viewBox="0 0 12 10"><rect x="1" y="6" width="10" height="3" fill="#fff" /></svg></button>
            <button type="button" aria-label="Restore" className="flex w-7 items-center justify-center border-r border-[#7d9cc0]"><svg width="12" height="12" viewBox="0 0 12 12" fill="none" stroke="#fff" strokeWidth="2"><path d="M2 4h6v7H2zM4 2h6v7" /></svg></button>
            <button type="button" aria-label="Close" className="flex w-[46px] items-center justify-center"><svg width="9" height="8" viewBox="0 0 9 8"><path d="M1 0l7 8M8 0L1 8" stroke="#fff" strokeWidth="2.500" /></svg></button>
          </div>
        </header>

        <nav className="flex h-[25px] shrink-0 items-center justify-between border-b border-[#a5a5a5] bg-gradient-to-r from-white via-[#f6f6f6] to-[#ededed]">
          <div className="flex items-center gap-4">
            <svg width="14" height="14" viewBox="0 0 14 14" className="-mr-1" aria-hidden="true"><rect x="1" y="1" width="12" height="12" fill="#fff" stroke="#2a3f80" strokeWidth="1.500" /><rect x="1" y="1" width="12" height="2" fill="#4a78c0" /><ellipse cx="7" cy="8" rx="4" ry="3.500" fill="#1c2c70" /><path d="M3 8h8" stroke="#fff" /></svg>
            {menus.map(([a, b, c]) => (
              <button key={a + b + c} type="button" className="whitespace-nowrap">
                {a}<span className="underline">{b}</span>{c}
              </button>
            ))}
            <button type="button" aria-label="Context help" className="flex items-center">
              <svg width="8" height="12" viewBox="0 0 8 12"><path d="M0 0l7 6H4l2 5-2 1-2-5-2 2z" fill="#000" /></svg>
              <b>?</b>
            </button>
          </div>
          <div className="mr-1 flex gap-1.5">
            <MdiBtn label="Minimize viewport"><path d="M2 7h5" strokeWidth="2" /></MdiBtn>
            <MdiBtn label="Restore viewport"><path d="M1 4h5v4H1zM3 3V1h6v4H7" /></MdiBtn>
            <MdiBtn label="Close viewport"><path d="M1 1l7 7M8 1L1 8" strokeWidth="2" /></MdiBtn>
          </div>
        </nav>

        <div className="flex h-7 shrink-0 bg-[#f0f0f0]">
          <div className="flex items-stretch border-b border-[#a5a5a5] bg-gradient-to-b from-white to-[#f0f0f0]">
            <Group first>
              {['new', 'open', 'save', 'print', 'dbIn', 'dbOut'].map((id) => <Tb key={id} id={id} />)}
            </Group>
            <Group>
              {['pan', 'rotate', 'zoom', 'zoomBox', 'fit', 'cycle'].map((id) => <Tb key={id} id={id} />)}
            </Group>
            <Group><Tb id="rails" /><Tb id="railsPersp" /></Group>
            <Group>
              <Tb id="cursor" on />
              <Combo label="Selection filter" value="All" className="h-[23px] w-[105px]" />
              <Tb id="copy" />
              <span className="h-4 w-px bg-[#aaa]" />
              <Tb id="ghost" /><Tb id="selBox" /><Tb id="selDots" /><Tb id="selCube" on />
            </Group>
            <Group><Tb id="wire" /><Tb id="hidden" /><Tb id="shaded" /></Group>
            <Group><Tb id="meshCube" on /><Tb id="seedCube" /><Tb id="nested" /></Group>
            <Group><Tb id="info" /></Group>
            <Group>
              {['unionR', 'unionL', 'disc', 'replace', 'undo', 'redo', 'parts', 'table'].map((id) => <Tb key={id} id={id} />)}
            </Group>
            <Group>
              <Tb id="palette" />
              <Combo label="Color coding" value="Mesh defaults" className="h-[23px] w-[120px]" />
              <Tb id="tanCube" />
              <button type="button" aria-label="Render options" className="flex w-[14px] items-center justify-center"><svg width="8" height="5" viewBox="0 0 8 5"><path d="M0 0h8L4 5z" fill="#000" /></svg></button>
            </Group>
            <Group><Tb id="datum" /><Tb id="table" /></Group>
          </div>
        </div>

        <div className="flex min-h-0 flex-1 border-b border-[#8a8a8a]">
          <aside className="flex w-[242px] shrink-0 flex-col pb-1.5">
            <div role="tablist" className="flex h-[30px] shrink-0 items-end bg-white">
              <button type="button" role="tab" aria-selected="true" className="h-6 w-[50px] border-t border-[#8f8f8f] bg-white">Model</button>
              <button type="button" role="tab" aria-selected="false" className="h-[21px] w-[52px] border border-[#8f8f8f] bg-gradient-to-b from-[#f2f2f2] to-[#cfcfcf]">Results</button>
              <span className="flex-1 self-end border-b border-[#8f8f8f]" />
            </div>
            <div className="flex h-8 shrink-0 items-center border-r border-[#a5a5a5] pt-1">
              <span className="flex h-[23px] w-[145px] items-stretch border border-[#8a8a8a] bg-white">
                <svg width="18" height="21" viewBox="0 0 18 21" className="shrink-0" aria-hidden="true"><g fill="#f0c838" stroke="#3a2c04" strokeWidth="1.200"><path d="M3 12c-1 3 1 6 7 6 3 0 6-1 6-3v-4" /><path d="M2 8c-1 3 2 5 7 5 4 0 7-1 7-3V7" /><path d="M2 5c0 3 3 4 7 4 5 0 8-2 7-4" /><ellipse cx="9" cy="4.500" rx="7" ry="2.500" fill="#fbe68c" /></g></svg>
                <select aria-label="Tree" defaultValue="Model Database" className="min-w-0 flex-1 appearance-none pl-1 outline-none"><option>Model Database</option></select>
                <Arrow />
              </span>
              <div className="flex flex-1 items-center justify-between pl-2 pr-px">
                <svg width="10" height="16" viewBox="0 0 10 16"><path d="M0 6h10L5 1zM0 10h10l-5 5z" fill="#999" /></svg>
                <svg width="16" height="16" viewBox="0 0 16 16" fill="none" stroke="#999"><path d="M1 3h5l1 2h8v9H1zM11 11H7V7M5 9l2-2 2 2" /></svg>
                <svg width="16" height="16" viewBox="0 0 16 16" fill="none" stroke="#999"><path d="M1 1h4v3H1zM6 6h4v3H6zM11 11h4v3h-4zM3 4v9h5M8 9v4M5 3h4v3M6 11l2 2" /></svg>
                <svg width="17" height="18" viewBox="0 0 17 18" fill="none" stroke="#333"><circle cx="8.500" cy="8" r="4" fill="#fbe860" /><path d="M6.500 12h4v4h-4z" fill="#888" /><path d="M8.500 0v2M1 8h2M14 8h2M3 2.500l2 2M14 2.500l-2 2M2.500 13l2-2M14.500 13l-2-2" stroke="#d8b820" /></svg>
              </div>
            </div>
            <div className="flex min-h-0 flex-1 flex-col border border-[#8f8f8f] border-b-[#a5a5a5]">
              <ul role="tree" className="-ml-0.5 flex-1 overflow-hidden pt-px">
                {rows.map(([g, name, icon]) => (
                  <li key={name} role="treeitem" className="flex h-[19px] items-center whitespace-nowrap">
                    {g.split('').map((k, i) => <Guide key={i} k={k} />)}
                    {icon ? <>{tree[icon]}<span className="pl-[5px]">{name}</span></> : <span className="ml-px border-b-2 border-black leading-4">{name}</span>}
                  </li>
                ))}
              </ul>
              <div className="flex h-4 shrink-0 items-stretch bg-[#f0f0f0]">
                <button type="button" aria-label="Scroll left" className="flex w-[18px] items-center justify-center"><svg width="4" height="7" viewBox="0 0 4 7"><path d="M4 0v7L0 3.500z" fill="#333" /></svg></button>
                <div className="flex w-[191px] items-center justify-center gap-0.5 rounded-sm border border-[#8f8f8f] bg-gradient-to-b from-[#f6f6f6] to-[#c8c8c8]">
                  <span className="h-1.5 w-px bg-[#444]" /><span className="h-1.5 w-px bg-[#444]" /><span className="h-1.5 w-px bg-[#444]" />
                </div>
                <button type="button" aria-label="Scroll right" className="ml-auto flex w-[18px] items-center justify-center"><svg width="4" height="7" viewBox="0 0 4 7"><path d="M0 0v7l4-3.500z" fill="#333" /></svg></button>
              </div>
            </div>
          </aside>

          <section className="ml-1.5 flex min-w-0 flex-1 flex-col">
            <div className="flex h-8 shrink-0 items-center bg-gradient-to-b from-white to-[#ececec] pl-[7px]">
              <span className="w-[49px]">Module:</span>
              <Combo label="Module" value="Mesh" spin className="h-6 w-[106px]" />
              <span className="ml-3.5 w-[42px]">Model:</span>
              <Combo label="Model" value="Model-1" spin className="h-6 w-[88px]" />
              <span className="ml-3.5 w-[42px]">Object:</span>
              <label className="flex w-[70px] items-center gap-1"><input type="radio" name="object" className="m-0 size-3" />Assembly</label>
              <label className="ml-0.5 flex w-[44px] items-center gap-1"><input type="radio" name="object" defaultChecked className="m-0 size-3 accent-[#1c5a8c]" />Part:</label>
              <Combo label="Part" value="SPA" spin className="h-6 w-[88px]" />
            </div>
            <div className="flex min-h-0 flex-1">
              <div className="w-[65px] shrink-0 bg-gradient-to-r from-white to-[#ededed] pl-1 pr-1">
                <div className="divide-y divide-[#a0a0a0]">
                  <Tools ids={['seedPart', 'seedEdge', 'meshPart', 'meshRegion', 'stackDir', 'assocMesh', 'elemType', 'verify', 'bottomUp']} />
                  <Tools ids={['remesh', 'manager']} />
                  <Tools ids={['partition', 'moveFace', 'erase']} />
                  <Tools ids={['pick', 'mergeEdge', 'cellPart', 'trim']} />
                  <Tools ids={['xyz', 'axes', 'plane', 'csys']} />
                  <Tools ids={['editMesh', 'virtual', 'loop']} />
                  <Tools ids={['wrench']} />
                </div>
              </div>
              <main className="relative min-w-0 flex-1 border border-r-2 border-[#5a6474] border-b-[#a8adb4] border-r-[#c8ccd2] bg-[linear-gradient(to_bottom,#1b2d45_0%,#24344e_25%,#2e3f59_59%,#41516a_66%,#66768c_78%,#8796ae_90%,#a1b2c7_100%)]">
                <Scene />
              </main>
            </div>
            <footer className="flex h-[38px] shrink-0 items-center justify-end gap-1.5 bg-gradient-to-b from-white to-[#ececec] pr-1 pt-0.5">
              <svg width="24" height="25" viewBox="0 0 21 24" fill="none" stroke="#1a9e96" strokeWidth="1.600" aria-hidden="true">
                <path d="M8 2c3-2 8-1 6 2-1 2-4 3-7 3M7 10c6-1 6 2 3 5-2 3-5 5-9 6 2-2 5-6 7-10M20 9c-4-1-8 1-6 4s3 3 2 5-4 2-6 2" />
              </svg>
              <span className="font-['DejaVu_Sans',sans-serif] text-base italic text-[#1a9e96]">SIMULIA</span>
            </footer>
          </section>
        </div>

        <div className="flex h-[30px] shrink-0 bg-white">
          <button type="button" aria-label="Message area" className="flex w-9 shrink-0 items-start pl-1.5 pt-2">
            <svg width="20" height="22" viewBox="0 0 20 22"><rect x="2" y="1" width="16" height="18" fill="#e4e4cc" stroke="#222" strokeWidth="1.500" /><path d="M1 21l8-8" stroke="#3a3008" strokeWidth="4" /><path d="M2 20l6-6" stroke="#e8c840" strokeWidth="2" /></svg>
          </button>
          <textarea aria-label="Messages" className="min-w-0 flex-1 resize-none border-x border-[#8a8a8a] bg-white outline-none" />
          <span className="w-[18px] shrink-0 bg-[#f0f0f0]" />
        </div>
      </div>

      <div className="flex w-2.5 shrink-0 flex-col overflow-hidden bg-white">
        <span className="h-[30px] bg-[#3a66b4]" />
        <span className="flex h-[41px] items-center bg-[#dfeaf6]"><span className="ml-1 size-6 shrink-0 rounded-full border border-[#8aa8c8]" /></span>
        <span className="h-[38px] bg-black" />
        <span className="h-[467px]" />
        <span className="flex h-[50px] items-center bg-[#a01c34]"><svg width="10" height="14" viewBox="0 0 10 14"><path d="M0 7h10M6 1l6 6-6 6" fill="none" stroke="#fff" strokeWidth="1.500" /></svg></span>
      </div>
    </div>
  );
}
